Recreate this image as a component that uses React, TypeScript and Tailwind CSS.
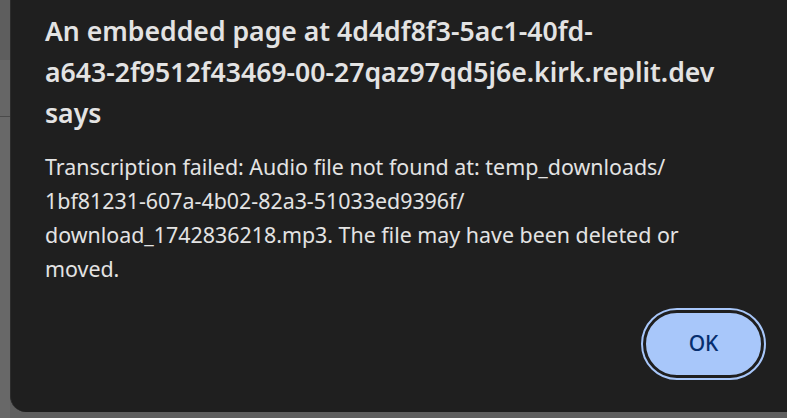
export default function App() {
    return (
        <div className='flex w-[787px] h-[418px] overflow-hidden bg-[#5f5f5f]' style={{fontFamily: "'Noto Sans', 'Open Sans', sans-serif"}}>
            {/*page behind the dialog*/}
            <div className='flex flex-col w-[10px] shrink-0'>
                <div className='h-[60px] bg-[#5e5e5e]'/>
                <div className='h-[57px] bg-[#666666] border-b border-[#4a4a4a]'/>
                <div className='flex-1 bg-[#686868]'/>
            </div>

            {/*dialog*/}
            <div className='flex flex-col w-[800px] h-[412px] shrink-0 bg-[#1f1f1f] border-l border-[#2c2c2c] rounded-bl-2xl pl-[34px] pr-[22px]'>
                <h1 className='text-[26.6px] leading-[41px] font-semibold text-[#e3e3e3] whitespace-nowrap pt-[11px]'>
                    An embedded page at 4d4df8f3-5ac1-40fd-<br/>
                    a643-2f9512f43469-00-27qaz97qd5j6e.kirk.replit.dev<br/>
                    says
                </h1>
                <p className='text-[21.4px] leading-[34px] text-[#e3e3e3] whitespace-nowrap mt-[16px]'>
                    Transcription failed: Audio file not found at: temp_downloads/<br/>
                    1bf81231-607a-4b02-82a3-51033ed9396f/<br/>
                    download_1742836218.mp3. The file may have been deleted or<br/>
                    moved.
                </p>
                <div className='flex w-[719px] justify-end mt-[24px]'>
                    <button className='flex items-center justify-center w-[121px] h-[68px] rounded-full bg-[#a8c7fa] border-[3px] border-[#1f1f1f] outline-[2px] outline-solid outline-[#a8c7fa] text-[#062e6f] text-[21px] font-medium'>
                        OK
                    </button>
                </div>
            </div>
        </div>
    );
}
